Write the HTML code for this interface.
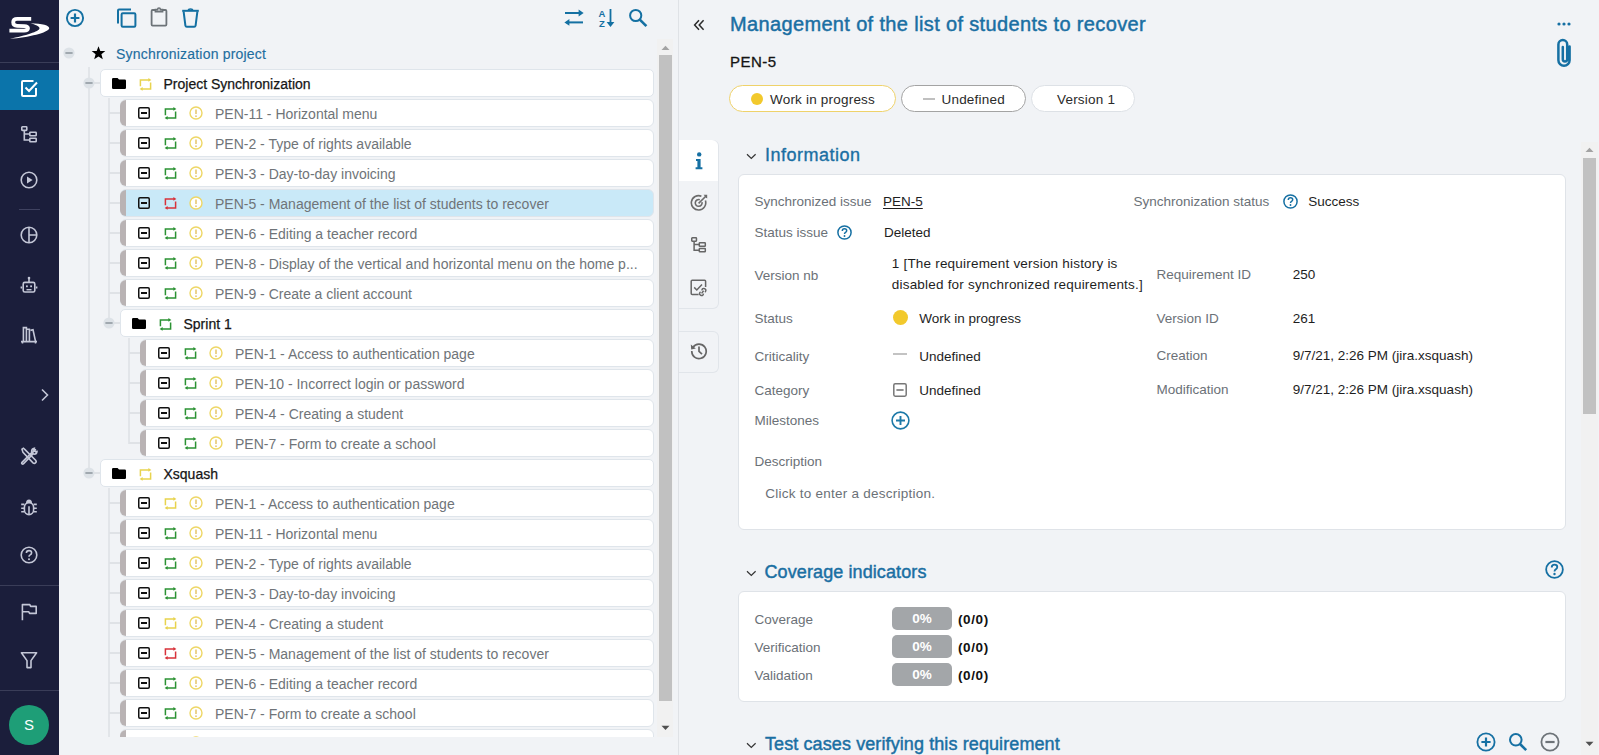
<!DOCTYPE html>
<html><head><meta charset="utf-8">
<style>
*{box-sizing:border-box;margin:0;padding:0}
html,body{width:1599px;height:755px;overflow:hidden;background:#f1f3f6;font-family:"Liberation Sans", sans-serif}
.abs{position:absolute}
.ic{position:absolute;display:block}
.card{position:absolute;background:#fff;border:1px solid #dfe5eb;border-radius:5px}
.bar{position:absolute;background:#b9b3b4;border-radius:6px 0 0 6px}
.tl{position:absolute;white-space:nowrap;font-size:14px;line-height:16px}
.vl{position:absolute;width:2px;background:#e2e5e9}
.hl{position:absolute;height:2px;background:#dfe2e6}
.lbl{position:absolute;white-space:nowrap;font-size:13.5px;line-height:16px;color:#6b7177}
.val{position:absolute;white-space:nowrap;font-size:13.5px;line-height:16px;color:#1e1e1e}
.sec{position:absolute;white-space:nowrap;font-size:18px;line-height:22px;color:#1670a3}
</style></head><body>
<div class="abs" style="left:0;top:0;width:59px;height:755px;background:#1b1e3b"></div><svg class="ic" style="left:4px;top:10px" width="50" height="35" viewBox="0 0 50 35">
<path d="M27.2 8.9H13.4Q9.2 8.9 9.2 12.2Q9.2 15.6 13.2 15.8L20.4 16.1Q24.2 16.3 24 18.4Q23.8 20.6 20 20.6H5.4" fill="none" stroke="#fff" stroke-width="3.8"/>
<path d="M26.5 13.3C38 13.5 46 15.5 45.2 18.5C44.2 22.5 25 27.5 5.5 28.8C22 25.5 35 21.5 35.5 18.5C36 16.5 31 14.5 26.5 13.3Z" fill="#fff"/>
</svg><div class="abs" style="left:0;top:62px;width:59px;height:1px;background:#3a3d58"></div><div class="abs" style="left:0;top:70px;width:59px;height:40px;background:#0b74aa"></div><svg class="ic" style="left:19px;top:78px" width="20" height="20" viewBox="0 0 20 20">
<path d="M14.5 3H4Q3 3 3 4V17Q3 18 4 18H16Q17 18 17 17V10" fill="none" stroke="#fff" stroke-width="2"/>
<path d="M6.5 9.5L10 13L18 4.5" fill="none" stroke="#fff" stroke-width="2"/>
</svg><svg class="ic" style="left:21px;top:126px" width="17" height="17" viewBox="0 0 17 17">
<g fill="none" stroke="#c4c7d7" stroke-width="1.6">
<rect x="0.8" y="0.8" width="5" height="3.6" rx="0.6"/>
<rect x="8.8" y="6.2" width="6.4" height="3.6" rx="0.6"/>
<rect x="8.8" y="12.2" width="6.4" height="3.6" rx="0.6"/>
<path d="M3.3 4.4V14H8.8M3.3 8H8.8"/>
</g></svg><svg class="ic" style="left:20px;top:171px" width="18" height="18" viewBox="0 0 18 18">
<circle cx="9" cy="9" r="7.8" fill="none" stroke="#c4c7d7" stroke-width="1.6"/>
<path d="M7 5.4L12.6 9L7 12.6Z" fill="#c4c7d7"/>
</svg><div class="abs" style="left:19px;top:209px;width:21px;height:1px;background:#3f4260"></div><svg class="ic" style="left:20px;top:226px" width="18" height="18" viewBox="0 0 18 18">
<circle cx="9" cy="9" r="7.8" fill="none" stroke="#c4c7d7" stroke-width="1.6"/>
<path d="M9 1.2V16.8M9 9H16.8" fill="none" stroke="#c4c7d7" stroke-width="1.6"/>
</svg><svg class="ic" style="left:20px;top:276px" width="18" height="18" viewBox="0 0 18 18">
<g fill="none" stroke="#c4c7d7" stroke-width="1.6">
<rect x="3.2" y="6.4" width="11.6" height="9.6" rx="1.6"/>
<path d="M9 6.4V3M1.4 10.5V12.6M16.6 10.5V12.6"/>
</g>
<circle cx="9" cy="2" r="1.3" fill="#c4c7d7"/>
<rect x="6" y="9.4" width="1.8" height="1.8" fill="#c4c7d7"/>
<rect x="10.2" y="9.4" width="1.8" height="1.8" fill="#c4c7d7"/>
<rect x="6.5" y="13" width="5" height="1.4" fill="#c4c7d7"/>
</svg><svg class="ic" style="left:20px;top:326px" width="18" height="18" viewBox="0 0 18 18">
<g fill="none" stroke="#c4c7d7" stroke-width="1.6">
<path d="M1 15.6H17M2.5 15.6V17.6M15.5 15.6V17.6"/>
<path d="M3.4 15.6V1.6H6.4V15.6M6.4 15.6V3.2H9.4V15.6"/>
<path d="M10.4 4.4L13 3.8L15.6 15.6"/>
</g></svg><svg class="ic" style="left:40px;top:388px" width="10" height="14" viewBox="0 0 10 14">
<path d="M2 1.5L7.5 7L2 12.5" fill="none" stroke="#c4c7d7" stroke-width="1.6"/>
</svg><svg class="ic" style="left:20px;top:447px" width="18" height="18" viewBox="0 0 18 18">
<g fill="none" stroke="#c4c7d7" stroke-width="1.6" stroke-linecap="round">
<path d="M2 2.2L3.4 1.2L5 2.6L15.6 13.2Q16.8 14.6 15.6 15.8Q14.4 17 13 15.8L3 5.4L2 2.2Z"/>
<path d="M10.4 7.6L15.4 2.6M14.2 1.2Q11.6 1.6 11.6 4.4L12 5.4L2 15.4Q1.2 16.2 2.1 16.9Q2.8 17.4 3.6 16.6L13.2 6.8L14.2 7.2Q16.8 7.2 17 4.4L15.4 4.6L13.6 3.2Z"/>
</g></svg><svg class="ic" style="left:20px;top:498px" width="18" height="18" viewBox="0 0 18 18">
<g fill="none" stroke="#c4c7d7" stroke-width="1.6">
<rect x="4.4" y="4.6" width="9.2" height="12" rx="4.6"/>
<path d="M9 8.2V16.4M1.2 6.4H4.4M1.2 10.2H4.4M1.2 13.8H4.4M13.6 6.4H16.8M13.6 10.2H16.8M13.6 13.8H16.8"/>
</g>
<path d="M6 5Q6 1.4 9 1.4Q12 1.4 12 5Z" fill="#c4c7d7"/>
</svg><svg class="ic" style="left:20px;top:546px" width="18" height="18" viewBox="0 0 18 18">
<circle cx="9" cy="9" r="7.8" fill="none" stroke="#c4c7d7" stroke-width="1.6"/>
<path d="M6.4 7Q6.4 4.6 9 4.6Q11.6 4.6 11.6 6.8Q11.6 8.2 10.2 8.9Q9 9.5 9 10.8" fill="none" stroke="#c4c7d7" stroke-width="1.6"/>
<circle cx="9" cy="13.2" r="1" fill="#c4c7d7"/>
</svg><div class="abs" style="left:0;top:585px;width:59px;height:1px;background:#3a3d58"></div><svg class="ic" style="left:20px;top:603px" width="18" height="18" viewBox="0 0 18 18">
<path d="M2.4 17.2V1.6H9.8L10.6 3.4H16.2V10.4H9.6L8.8 8.8H2.4" fill="none" stroke="#c4c7d7" stroke-width="1.6" stroke-linejoin="round"/>
</svg><svg class="ic" style="left:20px;top:651px" width="18" height="18" viewBox="0 0 18 18">
<path d="M1.4 1.8H16.6L11 9.6V16.6H7V9.6Z" fill="none" stroke="#c4c7d7" stroke-width="1.6" stroke-linejoin="round"/>
</svg><div class="abs" style="left:0;top:690px;width:59px;height:1px;background:#3a3d58"></div><div class="abs" style="left:9px;top:705px;width:40px;height:40px;border-radius:20px;background:#1e9e77;color:#fff;font-size:15px;line-height:40px;text-align:center">S</div><svg class="ic" style="left:65px;top:8px" width="20" height="20" viewBox="0 0 20 20">
<circle cx="10" cy="10" r="8.1" fill="none" stroke="#1470a2" stroke-width="1.9"/>
<path d="M10 5.6V14.4M5.6 10H14.4" stroke="#1470a2" stroke-width="2.2"/>
</svg><svg class="ic" style="left:116px;top:8px" width="22" height="20" viewBox="0 0 22 20">
<path d="M2 15.5V2.6Q2 1.6 3 1.6H15" fill="none" stroke="#1470a2" stroke-width="2"/>
<rect x="5.6" y="5.2" width="13.8" height="13.6" rx="1.2" fill="none" stroke="#1470a2" stroke-width="2"/>
</svg><svg class="ic" style="left:150px;top:7px" width="18" height="20" viewBox="0 0 18 20">
<path d="M5.4 3H2.6Q1.6 3 1.6 4V17.6Q1.6 18.6 2.6 18.6H15.4Q16.4 18.6 16.4 17.6V4Q16.4 3 15.4 3H12.6" fill="none" stroke="#6d7378" stroke-width="1.8"/>
<path d="M5.4 4.6V2.6H7.6Q7.6 1 9 1Q10.4 1 10.4 2.6H12.6V4.6Z" fill="none" stroke="#6d7378" stroke-width="1.6"/>
</svg><svg class="ic" style="left:181px;top:8px" width="19" height="20" viewBox="0 0 19 20">
<path d="M1.2 2.8H17.8" stroke="#1470a2" stroke-width="2"/>
<path d="M7.4 2.6Q7.4 1 9.5 1Q11.6 1 11.6 2.6" fill="none" stroke="#1470a2" stroke-width="1.6"/>
<path d="M2.6 3.4L4.4 17.6Q4.6 18.8 5.8 18.8H13.2Q14.4 18.8 14.6 17.6L16.4 3.4" fill="none" stroke="#1470a2" stroke-width="2"/>
</svg><svg class="ic" style="left:563px;top:8px" width="22" height="20" viewBox="0 0 22 20">
<path d="M2 5H18.5" stroke="#1470a2" stroke-width="2"/>
<path d="M15.6 1.6L20.6 5L15.6 8.4Z" fill="#1470a2"/>
<path d="M20 14.4H3.5" stroke="#1470a2" stroke-width="2"/>
<path d="M6.4 11L1.4 14.4L6.4 17.8Z" fill="#1470a2"/>
</svg><div class="abs" style="left:597px;top:8.5px;width:10px;font-size:9.5px;line-height:10px;font-weight:bold;color:#1470a2;text-align:center">A<br>Z</div><svg class="ic" style="left:605px;top:8px" width="12" height="20" viewBox="0 0 12 20">
<path d="M5.5 1V17" stroke="#1470a2" stroke-width="1.8"/>
<path d="M1.6 14L5.5 19L9.4 14Z" fill="#1470a2"/>
</svg><svg class="ic" style="left:627px;top:7px" width="22" height="22" viewBox="0 0 22 22">
<circle cx="8.7" cy="8.5" r="5.6" fill="none" stroke="#1470a2" stroke-width="2"/>
<path d="M12.8 12.6L19.4 19.2" stroke="#1470a2" stroke-width="2.6"/>
</svg><div class="abs" style="left:59px;top:39px;width:619px;height:698px;overflow:hidden"><div class="abs" style="left:4px;top:8px"><svg width="12" height="12" viewBox="0 0 12 12" style="display:block"><circle cx="6" cy="6" r="5.6" fill="#dde2e7"/><rect x="2.4" y="5.1" width="7.2" height="1.8" fill="#9aa2a9"/></svg></div><svg class="ic" style="left:32px;top:7px" width="15" height="14" viewBox="0 0 15 14">
<path d="M7.5 0.3L9.3 4.9L14.3 5.1L10.4 8.2L11.8 13.2L7.5 10.4L3.2 13.2L4.6 8.2L0.7 5.1L5.7 4.9Z" fill="#000"/></svg><div class="tl" style="left:57px;top:7px;color:#1f6e9f;letter-spacing:0.2px;-webkit-text-stroke:0.15px #1f6e9f">Synchronization project</div><div class="vl" style="left:29px;top:28px;height:407px"></div><div class="vl" style="left:49px;top:59px;height:226px"></div><div class="vl" style="left:69px;top:299px;height:106px"></div><div class="vl" style="left:49px;top:449px;height:272px"></div><div class="abs" style="left:24px;top:38px"><svg width="12" height="12" viewBox="0 0 12 12" style="display:block"><circle cx="6" cy="6" r="5.6" fill="#dde2e7"/><rect x="2.4" y="5.1" width="7.2" height="1.8" fill="#9aa2a9"/></svg></div><div class="hl" style="left:35px;top:43px;width:6px"></div><div class="card" style="left:41px;top:30px;width:554px;height:28px"></div><div class="abs" style="left:53px;top:38.5px"><svg width="14" height="11" viewBox="0 0 14 11" style="display:block"><path d="M0 1.2Q0 0 1.2 0H5.6L7 1.6H12.8Q14 1.6 14 2.8V9.8Q14 11 12.8 11H1.2Q0 11 0 9.8Z" fill="#000"/></svg></div><div class="abs" style="left:79.5px;top:38.5px"><svg width="13" height="13" viewBox="0 0 13 13" style="display:block"><path d="M1.4 8.2V1.9H10" fill="none" stroke="#e8d34e" stroke-width="1.5"/><path d="M9.4 0L12.4 1.9L9.4 3.8Z" fill="#e8d34e"/><path d="M11.6 4.6V10.9H3" fill="none" stroke="#e8d34e" stroke-width="1.5"/><path d="M3.6 9L0.6 10.9L3.6 12.8Z" fill="#e8d34e"/></svg></div><div class="tl" style="left:104.5px;top:37px;color:#161616;-webkit-text-stroke:0.25px #161616">Project Synchronization</div><div class="hl" style="left:50px;top:73px;width:11px"></div><div class="card" style="left:61px;top:60px;width:534px;height:28px;background:#fff;border-radius:6px"></div><div class="bar" style="left:61px;top:61px;width:6px;height:26px"></div><div class="abs" style="left:79px;top:68px"><svg width="12" height="12" viewBox="0 0 12 12" style="display:block"><rect x="0.75" y="0.75" width="10.5" height="10.5" rx="1.2" fill="none" stroke="#111" stroke-width="1.5"/><rect x="3" y="5" width="6" height="2" fill="#111"/></svg></div><div class="abs" style="left:105px;top:68px"><svg width="13" height="13" viewBox="0 0 13 13" style="display:block"><path d="M1.4 8.2V1.9H10" fill="none" stroke="#2b9233" stroke-width="1.5"/><path d="M9.4 0L12.4 1.9L9.4 3.8Z" fill="#2b9233"/><path d="M11.6 4.6V10.9H3" fill="none" stroke="#2b9233" stroke-width="1.5"/><path d="M3.6 9L0.6 10.9L3.6 12.8Z" fill="#2b9233"/></svg></div><div class="abs" style="left:130px;top:67px"><svg width="14" height="14" viewBox="0 0 14 14" style="display:block"><circle cx="7" cy="7" r="6" fill="#fff" stroke="#eed766" stroke-width="1.4"/><path d="M7 3.6V8" stroke="#e6c872" stroke-width="1.6"/><circle cx="7" cy="10.2" r="0.9" fill="#e6c872"/></svg></div><div class="tl" style="left:156px;top:67px;color:#6f7478">PEN-11 - Horizontal menu</div><div class="hl" style="left:50px;top:103px;width:11px"></div><div class="card" style="left:61px;top:90px;width:534px;height:28px;background:#fff;border-radius:6px"></div><div class="bar" style="left:61px;top:91px;width:6px;height:26px"></div><div class="abs" style="left:79px;top:98px"><svg width="12" height="12" viewBox="0 0 12 12" style="display:block"><rect x="0.75" y="0.75" width="10.5" height="10.5" rx="1.2" fill="none" stroke="#111" stroke-width="1.5"/><rect x="3" y="5" width="6" height="2" fill="#111"/></svg></div><div class="abs" style="left:105px;top:98px"><svg width="13" height="13" viewBox="0 0 13 13" style="display:block"><path d="M1.4 8.2V1.9H10" fill="none" stroke="#2b9233" stroke-width="1.5"/><path d="M9.4 0L12.4 1.9L9.4 3.8Z" fill="#2b9233"/><path d="M11.6 4.6V10.9H3" fill="none" stroke="#2b9233" stroke-width="1.5"/><path d="M3.6 9L0.6 10.9L3.6 12.8Z" fill="#2b9233"/></svg></div><div class="abs" style="left:130px;top:97px"><svg width="14" height="14" viewBox="0 0 14 14" style="display:block"><circle cx="7" cy="7" r="6" fill="#fff" stroke="#eed766" stroke-width="1.4"/><path d="M7 3.6V8" stroke="#e6c872" stroke-width="1.6"/><circle cx="7" cy="10.2" r="0.9" fill="#e6c872"/></svg></div><div class="tl" style="left:156px;top:97px;color:#6f7478">PEN-2 - Type of rights available</div><div class="hl" style="left:50px;top:133px;width:11px"></div><div class="card" style="left:61px;top:120px;width:534px;height:28px;background:#fff;border-radius:6px"></div><div class="bar" style="left:61px;top:121px;width:6px;height:26px"></div><div class="abs" style="left:79px;top:128px"><svg width="12" height="12" viewBox="0 0 12 12" style="display:block"><rect x="0.75" y="0.75" width="10.5" height="10.5" rx="1.2" fill="none" stroke="#111" stroke-width="1.5"/><rect x="3" y="5" width="6" height="2" fill="#111"/></svg></div><div class="abs" style="left:105px;top:128px"><svg width="13" height="13" viewBox="0 0 13 13" style="display:block"><path d="M1.4 8.2V1.9H10" fill="none" stroke="#2b9233" stroke-width="1.5"/><path d="M9.4 0L12.4 1.9L9.4 3.8Z" fill="#2b9233"/><path d="M11.6 4.6V10.9H3" fill="none" stroke="#2b9233" stroke-width="1.5"/><path d="M3.6 9L0.6 10.9L3.6 12.8Z" fill="#2b9233"/></svg></div><div class="abs" style="left:130px;top:127px"><svg width="14" height="14" viewBox="0 0 14 14" style="display:block"><circle cx="7" cy="7" r="6" fill="#fff" stroke="#eed766" stroke-width="1.4"/><path d="M7 3.6V8" stroke="#e6c872" stroke-width="1.6"/><circle cx="7" cy="10.2" r="0.9" fill="#e6c872"/></svg></div><div class="tl" style="left:156px;top:127px;color:#6f7478">PEN-3 - Day-to-day invoicing</div><div class="hl" style="left:50px;top:163px;width:11px"></div><div class="card" style="left:61px;top:150px;width:534px;height:28px;background:#c9e9f8;border-radius:6px"></div><div class="bar" style="left:61px;top:151px;width:6px;height:26px"></div><div class="abs" style="left:79px;top:158px"><svg width="12" height="12" viewBox="0 0 12 12" style="display:block"><rect x="0.75" y="0.75" width="10.5" height="10.5" rx="1.2" fill="none" stroke="#111" stroke-width="1.5"/><rect x="3" y="5" width="6" height="2" fill="#111"/></svg></div><div class="abs" style="left:105px;top:158px"><svg width="13" height="13" viewBox="0 0 13 13" style="display:block"><path d="M1.4 8.2V1.9H10" fill="none" stroke="#d8323a" stroke-width="1.5"/><path d="M9.4 0L12.4 1.9L9.4 3.8Z" fill="#d8323a"/><path d="M11.6 4.6V10.9H3" fill="none" stroke="#d8323a" stroke-width="1.5"/><path d="M3.6 9L0.6 10.9L3.6 12.8Z" fill="#d8323a"/></svg></div><div class="abs" style="left:130px;top:157px"><svg width="14" height="14" viewBox="0 0 14 14" style="display:block"><circle cx="7" cy="7" r="6" fill="#fff" stroke="#eed766" stroke-width="1.4"/><path d="M7 3.6V8" stroke="#e6c872" stroke-width="1.6"/><circle cx="7" cy="10.2" r="0.9" fill="#e6c872"/></svg></div><div class="tl" style="left:156px;top:157px;color:#6f7478">PEN-5 - Management of the list of students to recover</div><div class="hl" style="left:50px;top:193px;width:11px"></div><div class="card" style="left:61px;top:180px;width:534px;height:28px;background:#fff;border-radius:6px"></div><div class="bar" style="left:61px;top:181px;width:6px;height:26px"></div><div class="abs" style="left:79px;top:188px"><svg width="12" height="12" viewBox="0 0 12 12" style="display:block"><rect x="0.75" y="0.75" width="10.5" height="10.5" rx="1.2" fill="none" stroke="#111" stroke-width="1.5"/><rect x="3" y="5" width="6" height="2" fill="#111"/></svg></div><div class="abs" style="left:105px;top:188px"><svg width="13" height="13" viewBox="0 0 13 13" style="display:block"><path d="M1.4 8.2V1.9H10" fill="none" stroke="#2b9233" stroke-width="1.5"/><path d="M9.4 0L12.4 1.9L9.4 3.8Z" fill="#2b9233"/><path d="M11.6 4.6V10.9H3" fill="none" stroke="#2b9233" stroke-width="1.5"/><path d="M3.6 9L0.6 10.9L3.6 12.8Z" fill="#2b9233"/></svg></div><div class="abs" style="left:130px;top:187px"><svg width="14" height="14" viewBox="0 0 14 14" style="display:block"><circle cx="7" cy="7" r="6" fill="#fff" stroke="#eed766" stroke-width="1.4"/><path d="M7 3.6V8" stroke="#e6c872" stroke-width="1.6"/><circle cx="7" cy="10.2" r="0.9" fill="#e6c872"/></svg></div><div class="tl" style="left:156px;top:187px;color:#6f7478">PEN-6 - Editing a teacher record</div><div class="hl" style="left:50px;top:223px;width:11px"></div><div class="card" style="left:61px;top:210px;width:534px;height:28px;background:#fff;border-radius:6px"></div><div class="bar" style="left:61px;top:211px;width:6px;height:26px"></div><div class="abs" style="left:79px;top:218px"><svg width="12" height="12" viewBox="0 0 12 12" style="display:block"><rect x="0.75" y="0.75" width="10.5" height="10.5" rx="1.2" fill="none" stroke="#111" stroke-width="1.5"/><rect x="3" y="5" width="6" height="2" fill="#111"/></svg></div><div class="abs" style="left:105px;top:218px"><svg width="13" height="13" viewBox="0 0 13 13" style="display:block"><path d="M1.4 8.2V1.9H10" fill="none" stroke="#2b9233" stroke-width="1.5"/><path d="M9.4 0L12.4 1.9L9.4 3.8Z" fill="#2b9233"/><path d="M11.6 4.6V10.9H3" fill="none" stroke="#2b9233" stroke-width="1.5"/><path d="M3.6 9L0.6 10.9L3.6 12.8Z" fill="#2b9233"/></svg></div><div class="abs" style="left:130px;top:217px"><svg width="14" height="14" viewBox="0 0 14 14" style="display:block"><circle cx="7" cy="7" r="6" fill="#fff" stroke="#eed766" stroke-width="1.4"/><path d="M7 3.6V8" stroke="#e6c872" stroke-width="1.6"/><circle cx="7" cy="10.2" r="0.9" fill="#e6c872"/></svg></div><div class="tl" style="left:156px;top:217px;color:#6f7478">PEN-8 - Display of the vertical and horizontal menu on the home p...</div><div class="hl" style="left:50px;top:253px;width:11px"></div><div class="card" style="left:61px;top:240px;width:534px;height:28px;background:#fff;border-radius:6px"></div><div class="bar" style="left:61px;top:241px;width:6px;height:26px"></div><div class="abs" style="left:79px;top:248px"><svg width="12" height="12" viewBox="0 0 12 12" style="display:block"><rect x="0.75" y="0.75" width="10.5" height="10.5" rx="1.2" fill="none" stroke="#111" stroke-width="1.5"/><rect x="3" y="5" width="6" height="2" fill="#111"/></svg></div><div class="abs" style="left:105px;top:248px"><svg width="13" height="13" viewBox="0 0 13 13" style="display:block"><path d="M1.4 8.2V1.9H10" fill="none" stroke="#2b9233" stroke-width="1.5"/><path d="M9.4 0L12.4 1.9L9.4 3.8Z" fill="#2b9233"/><path d="M11.6 4.6V10.9H3" fill="none" stroke="#2b9233" stroke-width="1.5"/><path d="M3.6 9L0.6 10.9L3.6 12.8Z" fill="#2b9233"/></svg></div><div class="abs" style="left:130px;top:247px"><svg width="14" height="14" viewBox="0 0 14 14" style="display:block"><circle cx="7" cy="7" r="6" fill="#fff" stroke="#eed766" stroke-width="1.4"/><path d="M7 3.6V8" stroke="#e6c872" stroke-width="1.6"/><circle cx="7" cy="10.2" r="0.9" fill="#e6c872"/></svg></div><div class="tl" style="left:156px;top:247px;color:#6f7478">PEN-9 - Create a client account</div><div class="abs" style="left:44px;top:278px"><svg width="12" height="12" viewBox="0 0 12 12" style="display:block"><circle cx="6" cy="6" r="5.6" fill="#dde2e7"/><rect x="2.4" y="5.1" width="7.2" height="1.8" fill="#9aa2a9"/></svg></div><div class="hl" style="left:55px;top:283px;width:6px"></div><div class="card" style="left:61px;top:270px;width:534px;height:28px"></div><div class="abs" style="left:73px;top:278.5px"><svg width="14" height="11" viewBox="0 0 14 11" style="display:block"><path d="M0 1.2Q0 0 1.2 0H5.6L7 1.6H12.8Q14 1.6 14 2.8V9.8Q14 11 12.8 11H1.2Q0 11 0 9.8Z" fill="#000"/></svg></div><div class="abs" style="left:99.5px;top:278.5px"><svg width="13" height="13" viewBox="0 0 13 13" style="display:block"><path d="M1.4 8.2V1.9H10" fill="none" stroke="#2b9233" stroke-width="1.5"/><path d="M9.4 0L12.4 1.9L9.4 3.8Z" fill="#2b9233"/><path d="M11.6 4.6V10.9H3" fill="none" stroke="#2b9233" stroke-width="1.5"/><path d="M3.6 9L0.6 10.9L3.6 12.8Z" fill="#2b9233"/></svg></div><div class="tl" style="left:124.5px;top:277px;color:#161616;-webkit-text-stroke:0.25px #161616">Sprint 1</div><div class="hl" style="left:70px;top:313px;width:11px"></div><div class="card" style="left:81px;top:300px;width:514px;height:28px;background:#fff;border-radius:6px"></div><div class="bar" style="left:81px;top:301px;width:6px;height:26px"></div><div class="abs" style="left:99px;top:308px"><svg width="12" height="12" viewBox="0 0 12 12" style="display:block"><rect x="0.75" y="0.75" width="10.5" height="10.5" rx="1.2" fill="none" stroke="#111" stroke-width="1.5"/><rect x="3" y="5" width="6" height="2" fill="#111"/></svg></div><div class="abs" style="left:125px;top:308px"><svg width="13" height="13" viewBox="0 0 13 13" style="display:block"><path d="M1.4 8.2V1.9H10" fill="none" stroke="#2b9233" stroke-width="1.5"/><path d="M9.4 0L12.4 1.9L9.4 3.8Z" fill="#2b9233"/><path d="M11.6 4.6V10.9H3" fill="none" stroke="#2b9233" stroke-width="1.5"/><path d="M3.6 9L0.6 10.9L3.6 12.8Z" fill="#2b9233"/></svg></div><div class="abs" style="left:150px;top:307px"><svg width="14" height="14" viewBox="0 0 14 14" style="display:block"><circle cx="7" cy="7" r="6" fill="#fff" stroke="#eed766" stroke-width="1.4"/><path d="M7 3.6V8" stroke="#e6c872" stroke-width="1.6"/><circle cx="7" cy="10.2" r="0.9" fill="#e6c872"/></svg></div><div class="tl" style="left:176px;top:307px;color:#6f7478">PEN-1 - Access to authentication page</div><div class="hl" style="left:70px;top:343px;width:11px"></div><div class="card" style="left:81px;top:330px;width:514px;height:28px;background:#fff;border-radius:6px"></div><div class="bar" style="left:81px;top:331px;width:6px;height:26px"></div><div class="abs" style="left:99px;top:338px"><svg width="12" height="12" viewBox="0 0 12 12" style="display:block"><rect x="0.75" y="0.75" width="10.5" height="10.5" rx="1.2" fill="none" stroke="#111" stroke-width="1.5"/><rect x="3" y="5" width="6" height="2" fill="#111"/></svg></div><div class="abs" style="left:125px;top:338px"><svg width="13" height="13" viewBox="0 0 13 13" style="display:block"><path d="M1.4 8.2V1.9H10" fill="none" stroke="#2b9233" stroke-width="1.5"/><path d="M9.4 0L12.4 1.9L9.4 3.8Z" fill="#2b9233"/><path d="M11.6 4.6V10.9H3" fill="none" stroke="#2b9233" stroke-width="1.5"/><path d="M3.6 9L0.6 10.9L3.6 12.8Z" fill="#2b9233"/></svg></div><div class="abs" style="left:150px;top:337px"><svg width="14" height="14" viewBox="0 0 14 14" style="display:block"><circle cx="7" cy="7" r="6" fill="#fff" stroke="#eed766" stroke-width="1.4"/><path d="M7 3.6V8" stroke="#e6c872" stroke-width="1.6"/><circle cx="7" cy="10.2" r="0.9" fill="#e6c872"/></svg></div><div class="tl" style="left:176px;top:337px;color:#6f7478">PEN-10 - Incorrect login or password</div><div class="hl" style="left:70px;top:373px;width:11px"></div><div class="card" style="left:81px;top:360px;width:514px;height:28px;background:#fff;border-radius:6px"></div><div class="bar" style="left:81px;top:361px;width:6px;height:26px"></div><div class="abs" style="left:99px;top:368px"><svg width="12" height="12" viewBox="0 0 12 12" style="display:block"><rect x="0.75" y="0.75" width="10.5" height="10.5" rx="1.2" fill="none" stroke="#111" stroke-width="1.5"/><rect x="3" y="5" width="6" height="2" fill="#111"/></svg></div><div class="abs" style="left:125px;top:368px"><svg width="13" height="13" viewBox="0 0 13 13" style="display:block"><path d="M1.4 8.2V1.9H10" fill="none" stroke="#2b9233" stroke-width="1.5"/><path d="M9.4 0L12.4 1.9L9.4 3.8Z" fill="#2b9233"/><path d="M11.6 4.6V10.9H3" fill="none" stroke="#2b9233" stroke-width="1.5"/><path d="M3.6 9L0.6 10.9L3.6 12.8Z" fill="#2b9233"/></svg></div><div class="abs" style="left:150px;top:367px"><svg width="14" height="14" viewBox="0 0 14 14" style="display:block"><circle cx="7" cy="7" r="6" fill="#fff" stroke="#eed766" stroke-width="1.4"/><path d="M7 3.6V8" stroke="#e6c872" stroke-width="1.6"/><circle cx="7" cy="10.2" r="0.9" fill="#e6c872"/></svg></div><div class="tl" style="left:176px;top:367px;color:#6f7478">PEN-4 - Creating a student</div><div class="hl" style="left:70px;top:403px;width:11px"></div><div class="card" style="left:81px;top:390px;width:514px;height:28px;background:#fff;border-radius:6px"></div><div class="bar" style="left:81px;top:391px;width:6px;height:26px"></div><div class="abs" style="left:99px;top:398px"><svg width="12" height="12" viewBox="0 0 12 12" style="display:block"><rect x="0.75" y="0.75" width="10.5" height="10.5" rx="1.2" fill="none" stroke="#111" stroke-width="1.5"/><rect x="3" y="5" width="6" height="2" fill="#111"/></svg></div><div class="abs" style="left:125px;top:398px"><svg width="13" height="13" viewBox="0 0 13 13" style="display:block"><path d="M1.4 8.2V1.9H10" fill="none" stroke="#2b9233" stroke-width="1.5"/><path d="M9.4 0L12.4 1.9L9.4 3.8Z" fill="#2b9233"/><path d="M11.6 4.6V10.9H3" fill="none" stroke="#2b9233" stroke-width="1.5"/><path d="M3.6 9L0.6 10.9L3.6 12.8Z" fill="#2b9233"/></svg></div><div class="abs" style="left:150px;top:397px"><svg width="14" height="14" viewBox="0 0 14 14" style="display:block"><circle cx="7" cy="7" r="6" fill="#fff" stroke="#eed766" stroke-width="1.4"/><path d="M7 3.6V8" stroke="#e6c872" stroke-width="1.6"/><circle cx="7" cy="10.2" r="0.9" fill="#e6c872"/></svg></div><div class="tl" style="left:176px;top:397px;color:#6f7478">PEN-7 - Form to create a school</div><div class="abs" style="left:24px;top:428px"><svg width="12" height="12" viewBox="0 0 12 12" style="display:block"><circle cx="6" cy="6" r="5.6" fill="#dde2e7"/><rect x="2.4" y="5.1" width="7.2" height="1.8" fill="#9aa2a9"/></svg></div><div class="hl" style="left:35px;top:433px;width:6px"></div><div class="card" style="left:41px;top:420px;width:554px;height:28px"></div><div class="abs" style="left:53px;top:428.5px"><svg width="14" height="11" viewBox="0 0 14 11" style="display:block"><path d="M0 1.2Q0 0 1.2 0H5.6L7 1.6H12.8Q14 1.6 14 2.8V9.8Q14 11 12.8 11H1.2Q0 11 0 9.8Z" fill="#000"/></svg></div><div class="abs" style="left:79.5px;top:428.5px"><svg width="13" height="13" viewBox="0 0 13 13" style="display:block"><path d="M1.4 8.2V1.9H10" fill="none" stroke="#e8d34e" stroke-width="1.5"/><path d="M9.4 0L12.4 1.9L9.4 3.8Z" fill="#e8d34e"/><path d="M11.6 4.6V10.9H3" fill="none" stroke="#e8d34e" stroke-width="1.5"/><path d="M3.6 9L0.6 10.9L3.6 12.8Z" fill="#e8d34e"/></svg></div><div class="tl" style="left:104.5px;top:427px;color:#161616;-webkit-text-stroke:0.25px #161616">Xsquash</div><div class="hl" style="left:50px;top:463px;width:11px"></div><div class="card" style="left:61px;top:450px;width:534px;height:28px;background:#fff;border-radius:6px"></div><div class="bar" style="left:61px;top:451px;width:6px;height:26px"></div><div class="abs" style="left:79px;top:458px"><svg width="12" height="12" viewBox="0 0 12 12" style="display:block"><rect x="0.75" y="0.75" width="10.5" height="10.5" rx="1.2" fill="none" stroke="#111" stroke-width="1.5"/><rect x="3" y="5" width="6" height="2" fill="#111"/></svg></div><div class="abs" style="left:105px;top:458px"><svg width="13" height="13" viewBox="0 0 13 13" style="display:block"><path d="M1.4 8.2V1.9H10" fill="none" stroke="#e8d34e" stroke-width="1.5"/><path d="M9.4 0L12.4 1.9L9.4 3.8Z" fill="#e8d34e"/><path d="M11.6 4.6V10.9H3" fill="none" stroke="#e8d34e" stroke-width="1.5"/><path d="M3.6 9L0.6 10.9L3.6 12.8Z" fill="#e8d34e"/></svg></div><div class="abs" style="left:130px;top:457px"><svg width="14" height="14" viewBox="0 0 14 14" style="display:block"><circle cx="7" cy="7" r="6" fill="#fff" stroke="#eed766" stroke-width="1.4"/><path d="M7 3.6V8" stroke="#e6c872" stroke-width="1.6"/><circle cx="7" cy="10.2" r="0.9" fill="#e6c872"/></svg></div><div class="tl" style="left:156px;top:457px;color:#6f7478">PEN-1 - Access to authentication page</div><div class="hl" style="left:50px;top:493px;width:11px"></div><div class="card" style="left:61px;top:480px;width:534px;height:28px;background:#fff;border-radius:6px"></div><div class="bar" style="left:61px;top:481px;width:6px;height:26px"></div><div class="abs" style="left:79px;top:488px"><svg width="12" height="12" viewBox="0 0 12 12" style="display:block"><rect x="0.75" y="0.75" width="10.5" height="10.5" rx="1.2" fill="none" stroke="#111" stroke-width="1.5"/><rect x="3" y="5" width="6" height="2" fill="#111"/></svg></div><div class="abs" style="left:105px;top:488px"><svg width="13" height="13" viewBox="0 0 13 13" style="display:block"><path d="M1.4 8.2V1.9H10" fill="none" stroke="#2b9233" stroke-width="1.5"/><path d="M9.4 0L12.4 1.9L9.4 3.8Z" fill="#2b9233"/><path d="M11.6 4.6V10.9H3" fill="none" stroke="#2b9233" stroke-width="1.5"/><path d="M3.6 9L0.6 10.9L3.6 12.8Z" fill="#2b9233"/></svg></div><div class="abs" style="left:130px;top:487px"><svg width="14" height="14" viewBox="0 0 14 14" style="display:block"><circle cx="7" cy="7" r="6" fill="#fff" stroke="#eed766" stroke-width="1.4"/><path d="M7 3.6V8" stroke="#e6c872" stroke-width="1.6"/><circle cx="7" cy="10.2" r="0.9" fill="#e6c872"/></svg></div><div class="tl" style="left:156px;top:487px;color:#6f7478">PEN-11 - Horizontal menu</div><div class="hl" style="left:50px;top:523px;width:11px"></div><div class="card" style="left:61px;top:510px;width:534px;height:28px;background:#fff;border-radius:6px"></div><div class="bar" style="left:61px;top:511px;width:6px;height:26px"></div><div class="abs" style="left:79px;top:518px"><svg width="12" height="12" viewBox="0 0 12 12" style="display:block"><rect x="0.75" y="0.75" width="10.5" height="10.5" rx="1.2" fill="none" stroke="#111" stroke-width="1.5"/><rect x="3" y="5" width="6" height="2" fill="#111"/></svg></div><div class="abs" style="left:105px;top:518px"><svg width="13" height="13" viewBox="0 0 13 13" style="display:block"><path d="M1.4 8.2V1.9H10" fill="none" stroke="#2b9233" stroke-width="1.5"/><path d="M9.4 0L12.4 1.9L9.4 3.8Z" fill="#2b9233"/><path d="M11.6 4.6V10.9H3" fill="none" stroke="#2b9233" stroke-width="1.5"/><path d="M3.6 9L0.6 10.9L3.6 12.8Z" fill="#2b9233"/></svg></div><div class="abs" style="left:130px;top:517px"><svg width="14" height="14" viewBox="0 0 14 14" style="display:block"><circle cx="7" cy="7" r="6" fill="#fff" stroke="#eed766" stroke-width="1.4"/><path d="M7 3.6V8" stroke="#e6c872" stroke-width="1.6"/><circle cx="7" cy="10.2" r="0.9" fill="#e6c872"/></svg></div><div class="tl" style="left:156px;top:517px;color:#6f7478">PEN-2 - Type of rights available</div><div class="hl" style="left:50px;top:553px;width:11px"></div><div class="card" style="left:61px;top:540px;width:534px;height:28px;background:#fff;border-radius:6px"></div><div class="bar" style="left:61px;top:541px;width:6px;height:26px"></div><div class="abs" style="left:79px;top:548px"><svg width="12" height="12" viewBox="0 0 12 12" style="display:block"><rect x="0.75" y="0.75" width="10.5" height="10.5" rx="1.2" fill="none" stroke="#111" stroke-width="1.5"/><rect x="3" y="5" width="6" height="2" fill="#111"/></svg></div><div class="abs" style="left:105px;top:548px"><svg width="13" height="13" viewBox="0 0 13 13" style="display:block"><path d="M1.4 8.2V1.9H10" fill="none" stroke="#2b9233" stroke-width="1.5"/><path d="M9.4 0L12.4 1.9L9.4 3.8Z" fill="#2b9233"/><path d="M11.6 4.6V10.9H3" fill="none" stroke="#2b9233" stroke-width="1.5"/><path d="M3.6 9L0.6 10.9L3.6 12.8Z" fill="#2b9233"/></svg></div><div class="abs" style="left:130px;top:547px"><svg width="14" height="14" viewBox="0 0 14 14" style="display:block"><circle cx="7" cy="7" r="6" fill="#fff" stroke="#eed766" stroke-width="1.4"/><path d="M7 3.6V8" stroke="#e6c872" stroke-width="1.6"/><circle cx="7" cy="10.2" r="0.9" fill="#e6c872"/></svg></div><div class="tl" style="left:156px;top:547px;color:#6f7478">PEN-3 - Day-to-day invoicing</div><div class="hl" style="left:50px;top:583px;width:11px"></div><div class="card" style="left:61px;top:570px;width:534px;height:28px;background:#fff;border-radius:6px"></div><div class="bar" style="left:61px;top:571px;width:6px;height:26px"></div><div class="abs" style="left:79px;top:578px"><svg width="12" height="12" viewBox="0 0 12 12" style="display:block"><rect x="0.75" y="0.75" width="10.5" height="10.5" rx="1.2" fill="none" stroke="#111" stroke-width="1.5"/><rect x="3" y="5" width="6" height="2" fill="#111"/></svg></div><div class="abs" style="left:105px;top:578px"><svg width="13" height="13" viewBox="0 0 13 13" style="display:block"><path d="M1.4 8.2V1.9H10" fill="none" stroke="#e8d34e" stroke-width="1.5"/><path d="M9.4 0L12.4 1.9L9.4 3.8Z" fill="#e8d34e"/><path d="M11.6 4.6V10.9H3" fill="none" stroke="#e8d34e" stroke-width="1.5"/><path d="M3.6 9L0.6 10.9L3.6 12.8Z" fill="#e8d34e"/></svg></div><div class="abs" style="left:130px;top:577px"><svg width="14" height="14" viewBox="0 0 14 14" style="display:block"><circle cx="7" cy="7" r="6" fill="#fff" stroke="#eed766" stroke-width="1.4"/><path d="M7 3.6V8" stroke="#e6c872" stroke-width="1.6"/><circle cx="7" cy="10.2" r="0.9" fill="#e6c872"/></svg></div><div class="tl" style="left:156px;top:577px;color:#6f7478">PEN-4 - Creating a student</div><div class="hl" style="left:50px;top:613px;width:11px"></div><div class="card" style="left:61px;top:600px;width:534px;height:28px;background:#fff;border-radius:6px"></div><div class="bar" style="left:61px;top:601px;width:6px;height:26px"></div><div class="abs" style="left:79px;top:608px"><svg width="12" height="12" viewBox="0 0 12 12" style="display:block"><rect x="0.75" y="0.75" width="10.5" height="10.5" rx="1.2" fill="none" stroke="#111" stroke-width="1.5"/><rect x="3" y="5" width="6" height="2" fill="#111"/></svg></div><div class="abs" style="left:105px;top:608px"><svg width="13" height="13" viewBox="0 0 13 13" style="display:block"><path d="M1.4 8.2V1.9H10" fill="none" stroke="#d8323a" stroke-width="1.5"/><path d="M9.4 0L12.4 1.9L9.4 3.8Z" fill="#d8323a"/><path d="M11.6 4.6V10.9H3" fill="none" stroke="#d8323a" stroke-width="1.5"/><path d="M3.6 9L0.6 10.9L3.6 12.8Z" fill="#d8323a"/></svg></div><div class="abs" style="left:130px;top:607px"><svg width="14" height="14" viewBox="0 0 14 14" style="display:block"><circle cx="7" cy="7" r="6" fill="#fff" stroke="#eed766" stroke-width="1.4"/><path d="M7 3.6V8" stroke="#e6c872" stroke-width="1.6"/><circle cx="7" cy="10.2" r="0.9" fill="#e6c872"/></svg></div><div class="tl" style="left:156px;top:607px;color:#6f7478">PEN-5 - Management of the list of students to recover</div><div class="hl" style="left:50px;top:643px;width:11px"></div><div class="card" style="left:61px;top:630px;width:534px;height:28px;background:#fff;border-radius:6px"></div><div class="bar" style="left:61px;top:631px;width:6px;height:26px"></div><div class="abs" style="left:79px;top:638px"><svg width="12" height="12" viewBox="0 0 12 12" style="display:block"><rect x="0.75" y="0.75" width="10.5" height="10.5" rx="1.2" fill="none" stroke="#111" stroke-width="1.5"/><rect x="3" y="5" width="6" height="2" fill="#111"/></svg></div><div class="abs" style="left:105px;top:638px"><svg width="13" height="13" viewBox="0 0 13 13" style="display:block"><path d="M1.4 8.2V1.9H10" fill="none" stroke="#2b9233" stroke-width="1.5"/><path d="M9.4 0L12.4 1.9L9.4 3.8Z" fill="#2b9233"/><path d="M11.6 4.6V10.9H3" fill="none" stroke="#2b9233" stroke-width="1.5"/><path d="M3.6 9L0.6 10.9L3.6 12.8Z" fill="#2b9233"/></svg></div><div class="abs" style="left:130px;top:637px"><svg width="14" height="14" viewBox="0 0 14 14" style="display:block"><circle cx="7" cy="7" r="6" fill="#fff" stroke="#eed766" stroke-width="1.4"/><path d="M7 3.6V8" stroke="#e6c872" stroke-width="1.6"/><circle cx="7" cy="10.2" r="0.9" fill="#e6c872"/></svg></div><div class="tl" style="left:156px;top:637px;color:#6f7478">PEN-6 - Editing a teacher record</div><div class="hl" style="left:50px;top:673px;width:11px"></div><div class="card" style="left:61px;top:660px;width:534px;height:28px;background:#fff;border-radius:6px"></div><div class="bar" style="left:61px;top:661px;width:6px;height:26px"></div><div class="abs" style="left:79px;top:668px"><svg width="12" height="12" viewBox="0 0 12 12" style="display:block"><rect x="0.75" y="0.75" width="10.5" height="10.5" rx="1.2" fill="none" stroke="#111" stroke-width="1.5"/><rect x="3" y="5" width="6" height="2" fill="#111"/></svg></div><div class="abs" style="left:105px;top:668px"><svg width="13" height="13" viewBox="0 0 13 13" style="display:block"><path d="M1.4 8.2V1.9H10" fill="none" stroke="#2b9233" stroke-width="1.5"/><path d="M9.4 0L12.4 1.9L9.4 3.8Z" fill="#2b9233"/><path d="M11.6 4.6V10.9H3" fill="none" stroke="#2b9233" stroke-width="1.5"/><path d="M3.6 9L0.6 10.9L3.6 12.8Z" fill="#2b9233"/></svg></div><div class="abs" style="left:130px;top:667px"><svg width="14" height="14" viewBox="0 0 14 14" style="display:block"><circle cx="7" cy="7" r="6" fill="#fff" stroke="#eed766" stroke-width="1.4"/><path d="M7 3.6V8" stroke="#e6c872" stroke-width="1.6"/><circle cx="7" cy="10.2" r="0.9" fill="#e6c872"/></svg></div><div class="tl" style="left:156px;top:667px;color:#6f7478">PEN-7 - Form to create a school</div><div class="hl" style="left:50px;top:703px;width:11px"></div><div class="card" style="left:61px;top:690px;width:534px;height:28px;background:#fff;border-radius:6px"></div><div class="bar" style="left:61px;top:691px;width:6px;height:26px"></div><div class="abs" style="left:79px;top:698px"><svg width="12" height="12" viewBox="0 0 12 12" style="display:block"><rect x="0.75" y="0.75" width="10.5" height="10.5" rx="1.2" fill="none" stroke="#111" stroke-width="1.5"/><rect x="3" y="5" width="6" height="2" fill="#111"/></svg></div><div class="abs" style="left:105px;top:698px"><svg width="13" height="13" viewBox="0 0 13 13" style="display:block"><path d="M1.4 8.2V1.9H10" fill="none" stroke="#e8d34e" stroke-width="1.5"/><path d="M9.4 0L12.4 1.9L9.4 3.8Z" fill="#e8d34e"/><path d="M11.6 4.6V10.9H3" fill="none" stroke="#e8d34e" stroke-width="1.5"/><path d="M3.6 9L0.6 10.9L3.6 12.8Z" fill="#e8d34e"/></svg></div><div class="abs" style="left:130px;top:697px"><svg width="14" height="14" viewBox="0 0 14 14" style="display:block"><circle cx="7" cy="7" r="6" fill="#fff" stroke="#eed766" stroke-width="1.4"/><path d="M7 3.6V8" stroke="#e6c872" stroke-width="1.6"/><circle cx="7" cy="10.2" r="0.9" fill="#e6c872"/></svg></div><div class="tl" style="left:156px;top:697px;color:#6f7478">PEN-8 - Display of the vertical and horizontal menu on the home p...</div><div class="abs" style="left:598px;top:0;width:16px;height:698px;background:#f1f1f1"></div><div class="abs" style="left:600px;top:16px;width:13px;height:646px;background:#c1c1c1"></div><svg class="ic" style="left:602px;top:6px" width="9" height="6" viewBox="0 0 9 6"><path d="M0.5 5L4.5 0.8L8.5 5Z" fill="#a3a3a3"/></svg><svg class="ic" style="left:602px;top:686px" width="9" height="6" viewBox="0 0 9 6"><path d="M0.5 0.8L4.5 5L8.5 0.8Z" fill="#505050"/></svg></div><div class="abs" style="left:678px;top:0;width:1px;height:755px;background:#dfe2e6"></div><svg class="ic" style="left:693px;top:19px" width="12" height="12" viewBox="0 0 12 12"><path d="M6 1.2L1.6 6L6 10.8M10.6 1.2L6.2 6L10.6 10.8" fill="none" stroke="#2b2b2b" stroke-width="1.5"/></svg><div class="abs" style="left:730px;top:11.57px;font-size:20px;line-height:25px;color:#1a6fa3;font-weight:400;white-space:nowrap;letter-spacing:0.35px;-webkit-text-stroke:0.45px #1a6fa3">Management of the list of students to recover</div><div class="abs" style="left:730px;top:52.10px;font-size:15px;line-height:19px;color:#141414;font-weight:400;white-space:nowrap;letter-spacing:0.5px;-webkit-text-stroke:0.3px #141414">PEN-5</div><svg class="ic" style="left:1556px;top:21px" width="16" height="6" viewBox="0 0 16 6"><circle cx="3" cy="3" r="1.6" fill="#1670a3"/><circle cx="8" cy="3" r="1.6" fill="#1670a3"/><circle cx="13" cy="3" r="1.6" fill="#1670a3"/></svg><svg class="ic" style="left:1555px;top:37px" width="18" height="32" viewBox="0 0 18 32">
<path d="M14.6 9.6V23.2A5.6 5.6 0 0 1 3.4 23.2V7.4A4.4 4.4 0 0 1 12.2 7.4V22.2A2.2 2.2 0 0 1 7.8 22.2V10" fill="none" stroke="#1670a3" stroke-width="2.5" stroke-linecap="round"/>
</svg><div class="abs" style="left:729px;top:85px;width:167px;height:27px;border:1px solid #efd26a;border-radius:14px;background:#fff"></div><div class="abs" style="left:751px;top:93px;width:12px;height:12px;border-radius:6px;background:#f2c92c"></div><div class="abs" style="left:770px;top:90.82px;font-size:13.5px;line-height:17px;color:#2a2a2a;font-weight:400;white-space:nowrap;letter-spacing:0.2px">Work in progress</div><div class="abs" style="left:901px;top:85px;width:125px;height:27px;border:1px solid #a3a3a3;border-radius:14px;background:#fff"></div><div class="abs" style="left:923px;top:98px;width:12px;height:1.5px;background:#c0c0c0"></div><div class="abs" style="left:941.5px;top:90.82px;font-size:13.5px;line-height:17px;color:#2a2a2a;font-weight:400;white-space:nowrap;letter-spacing:0.2px">Undefined</div><div class="abs" style="left:1031px;top:85px;width:104px;height:27px;border:1px solid #dde1e6;border-radius:14px;background:#fff"></div><div class="abs" style="left:1057px;top:90.82px;font-size:13.5px;line-height:17px;color:#2a2a2a;font-weight:400;white-space:nowrap;letter-spacing:0.2px">Version 1</div><div class="abs" style="left:679px;top:140px;width:40px;height:169px;border:1px solid #e1e5ea;border-left:none;border-radius:0 6px 6px 0;background:#f1f3f6"></div><div class="abs" style="left:679px;top:140px;width:39px;height:41px;border-radius:0 6px 0 0;background:#fff"></div><div class="abs" style="left:679px;top:331px;width:40px;height:42px;border:1px solid #e1e5ea;border-left:none;border-radius:0 6px 6px 0;background:#f1f3f6"></div><svg class="ic" style="left:694px;top:152px" width="10" height="18" viewBox="0 0 10 18">
<circle cx="5.2" cy="2.4" r="2.2" fill="#1670a3"/>
<path d="M2 7H6.6V15.2H8.4V17.2H1.6V15.2H3.4V9H2Z" fill="#1670a3"/></svg><svg class="ic" style="left:690px;top:194px" width="18" height="18" viewBox="0 0 18 18">
<g fill="none" stroke="#6b6b6b" stroke-width="1.6">
<path d="M15.4 6.6A7.2 7.2 0 1 1 11.4 2.2"/>
<path d="M12 8.2A3.4 3.4 0 1 1 9.8 5.7"/>
<path d="M8.6 9.4L15.8 2.2"/>
</g>
<path d="M13.6 0.8L17.2 0.8L17.2 4.4L15.6 3.2Z" fill="#6b6b6b"/>
</svg><svg class="ic" style="left:691px;top:237px" width="16" height="16" viewBox="0 0 17 17">
<g fill="none" stroke="#666" stroke-width="1.6">
<rect x="0.8" y="0.8" width="5" height="3.6" rx="0.6"/>
<rect x="8.8" y="6.2" width="6.4" height="3.6" rx="0.6"/>
<rect x="8.8" y="12.2" width="6.4" height="3.6" rx="0.6"/>
<path d="M3.3 4.4V14H8.8M3.3 8H8.8"/>
</g></svg><svg class="ic" style="left:690px;top:279px" width="19" height="18" viewBox="0 0 19 18">
<g fill="none" stroke="#666" stroke-width="1.5">
<path d="M8.6 15.6H2.2Q1.2 15.6 1.2 14.6V2.2Q1.2 1.2 2.2 1.2H14.6Q15.6 1.2 15.6 2.2V8"/>
<path d="M4.2 8.4L6.8 11L12 5.6"/>
<path d="M12 11.4A1.8 1.8 0 0 1 14.6 9.6L15.6 10.4A1.8 1.8 0 0 1 14.8 13"/>
<path d="M13.4 14.6A1.8 1.8 0 0 1 10.8 16.4L9.8 15.6A1.8 1.8 0 0 1 10.6 13"/>
<path d="M11.6 14.4L13.6 11.8"/>
</g></svg><svg class="ic" style="left:690px;top:342px" width="18" height="18" viewBox="0 0 18 18">
<g fill="none" stroke="#666" stroke-width="1.7">
<path d="M3 5.4A7.2 7.2 0 1 1 1.8 9"/>
<path d="M9 4.6V9.4L12 12.2"/>
</g>
<path d="M0.8 2.6L1.2 7.6L5.8 6.4Z" fill="#666"/>
</svg><svg class="ic" style="left:746px;top:153px" width="11" height="7" viewBox="0 0 11 7"><path d="M1 1.2L5.3 5.4L9.6 1.2" fill="none" stroke="#333" stroke-width="1.2"/></svg><div class="abs" style="left:765px;top:143.76px;font-size:18px;line-height:22px;color:#1a6fa3;font-weight:400;white-space:nowrap;letter-spacing:0.5px;-webkit-text-stroke:0.35px #1a6fa3">Information</div><div class="abs" style="left:738px;top:174px;width:828px;height:356px;background:#fff;border:1px solid #dfe3e8;border-radius:6px"></div><div class="abs" style="left:754.5px;top:192.82px;font-size:13.5px;line-height:17px;color:#6b7177;font-weight:400;white-space:nowrap;">Synchronized issue</div><div class="abs" style="left:883px;top:192.82px;font-size:13.5px;line-height:17px;color:#1e1e1e;font-weight:400;white-space:nowrap;text-decoration:underline;text-underline-offset:2px">PEN-5</div><div class="abs" style="left:1133.5px;top:192.82px;font-size:13.5px;line-height:17px;color:#6b7177;font-weight:400;white-space:nowrap;">Synchronization status</div><svg class="ic" style="left:1283.20px;top:194.00px" width="15" height="15" viewBox="0 0 15 15">
<circle cx="7.5" cy="7.5" r="6.6" fill="none" stroke="#1670a3" stroke-width="1.50"/>
<path d="M5.3 5.9Q5.3 3.7 7.5 3.7Q9.7 3.7 9.7 5.6Q9.7 6.8 8.5 7.4Q7.5 7.9 7.5 9" fill="none" stroke="#1670a3" stroke-width="1.50"/>
<circle cx="7.5" cy="11" r="0.95" fill="#1670a3"/></svg><div class="abs" style="left:1308.3px;top:192.82px;font-size:13.5px;line-height:17px;color:#1e1e1e;font-weight:400;white-space:nowrap;">Success</div><div class="abs" style="left:754.5px;top:223.82px;font-size:13.5px;line-height:17px;color:#6b7177;font-weight:400;white-space:nowrap;">Status issue</div><svg class="ic" style="left:837.10px;top:224.80px" width="15" height="15" viewBox="0 0 15 15">
<circle cx="7.5" cy="7.5" r="6.6" fill="none" stroke="#1670a3" stroke-width="1.50"/>
<path d="M5.3 5.9Q5.3 3.7 7.5 3.7Q9.7 3.7 9.7 5.6Q9.7 6.8 8.5 7.4Q7.5 7.9 7.5 9" fill="none" stroke="#1670a3" stroke-width="1.50"/>
<circle cx="7.5" cy="11" r="0.95" fill="#1670a3"/></svg><div class="abs" style="left:884px;top:223.82px;font-size:13.5px;line-height:17px;color:#1e1e1e;font-weight:400;white-space:nowrap;">Deleted</div><div class="abs" style="left:754.5px;top:266.82px;font-size:13.5px;line-height:17px;color:#6b7177;font-weight:400;white-space:nowrap;">Version nb</div><div class="abs" style="left:891.8px;top:255.32px;font-size:13.5px;line-height:17px;color:#1e1e1e;font-weight:400;white-space:nowrap;letter-spacing:0.2px">1 [The requirement version history is</div><div class="abs" style="left:891.8px;top:275.82px;font-size:13.5px;line-height:17px;color:#1e1e1e;font-weight:400;white-space:nowrap;letter-spacing:0.2px">disabled for synchronized requirements.]</div><div class="abs" style="left:1156.5px;top:266.32px;font-size:13.5px;line-height:17px;color:#6b7177;font-weight:400;white-space:nowrap;">Requirement ID</div><div class="abs" style="left:1292.8px;top:266.32px;font-size:13.5px;line-height:17px;color:#1e1e1e;font-weight:400;white-space:nowrap;">250</div><div class="abs" style="left:754.5px;top:309.82px;font-size:13.5px;line-height:17px;color:#6b7177;font-weight:400;white-space:nowrap;">Status</div><div class="abs" style="left:892.5px;top:310px;width:15px;height:15px;border-radius:8px;background:#f2c92c"></div><div class="abs" style="left:919.2px;top:309.82px;font-size:13.5px;line-height:17px;color:#1e1e1e;font-weight:400;white-space:nowrap;">Work in progress</div><div class="abs" style="left:1156.5px;top:309.82px;font-size:13.5px;line-height:17px;color:#6b7177;font-weight:400;white-space:nowrap;">Version ID</div><div class="abs" style="left:1292.8px;top:309.82px;font-size:13.5px;line-height:17px;color:#1e1e1e;font-weight:400;white-space:nowrap;">261</div><div class="abs" style="left:754.5px;top:347.52px;font-size:13.5px;line-height:17px;color:#6b7177;font-weight:400;white-space:nowrap;">Criticality</div><div class="abs" style="left:893px;top:353px;width:14px;height:1.6px;background:#c3c3c3"></div><div class="abs" style="left:919.2px;top:347.52px;font-size:13.5px;line-height:17px;color:#1e1e1e;font-weight:400;white-space:nowrap;">Undefined</div><div class="abs" style="left:1156.5px;top:347.32px;font-size:13.5px;line-height:17px;color:#6b7177;font-weight:400;white-space:nowrap;">Creation</div><div class="abs" style="left:1292.8px;top:347.32px;font-size:13.5px;line-height:17px;color:#1e1e1e;font-weight:400;white-space:nowrap;">9/7/21, 2:26 PM (jira.xsquash)</div><div class="abs" style="left:754.5px;top:381.52px;font-size:13.5px;line-height:17px;color:#6b7177;font-weight:400;white-space:nowrap;">Category</div><svg class="ic" style="left:892.5px;top:382.5px" width="14" height="14" viewBox="0 0 14 14">
<rect x="0.8" y="0.8" width="12.4" height="12.4" rx="1.4" fill="none" stroke="#777" stroke-width="1.5"/>
<rect x="3.4" y="6.2" width="7.2" height="1.6" fill="#777"/></svg><div class="abs" style="left:919.2px;top:381.52px;font-size:13.5px;line-height:17px;color:#1e1e1e;font-weight:400;white-space:nowrap;">Undefined</div><div class="abs" style="left:1156.5px;top:381.12px;font-size:13.5px;line-height:17px;color:#6b7177;font-weight:400;white-space:nowrap;">Modification</div><div class="abs" style="left:1292.8px;top:381.12px;font-size:13.5px;line-height:17px;color:#1e1e1e;font-weight:400;white-space:nowrap;">9/7/21, 2:26 PM (jira.xsquash)</div><div class="abs" style="left:754.5px;top:411.82px;font-size:13.5px;line-height:17px;color:#6b7177;font-weight:400;white-space:nowrap;">Milestones</div><svg class="ic" style="left:890.5px;top:410.5px" width="19" height="19" viewBox="0 0 19 19">
<circle cx="9.5" cy="9.5" r="8.4" fill="none" stroke="#1c79a8" stroke-width="1.6"/>
<path d="M9.5 5V14M5 9.5H14" stroke="#1c79a8" stroke-width="1.9"/></svg><div class="abs" style="left:754.5px;top:453.32px;font-size:13.5px;line-height:17px;color:#6b7177;font-weight:400;white-space:nowrap;">Description</div><div class="abs" style="left:765.3px;top:484.82px;font-size:13.5px;line-height:17px;color:#6b7177;font-weight:400;white-space:nowrap;letter-spacing:0.25px">Click to enter a description.</div><svg class="ic" style="left:746px;top:570px" width="11" height="7" viewBox="0 0 11 7"><path d="M1 1.2L5.3 5.4L9.6 1.2" fill="none" stroke="#333" stroke-width="1.2"/></svg><div class="abs" style="left:764.5px;top:560.76px;font-size:18px;line-height:22px;color:#1a6fa3;font-weight:400;white-space:nowrap;letter-spacing:0.1px;-webkit-text-stroke:0.45px #1a6fa3">Coverage indicators</div><svg class="ic" style="left:1545.00px;top:559.50px" width="19" height="19" viewBox="0 0 15 15">
<circle cx="7.5" cy="7.5" r="6.6" fill="none" stroke="#1670a3" stroke-width="1.42"/>
<path d="M5.3 5.9Q5.3 3.7 7.5 3.7Q9.7 3.7 9.7 5.6Q9.7 6.8 8.5 7.4Q7.5 7.9 7.5 9" fill="none" stroke="#1670a3" stroke-width="1.42"/>
<circle cx="7.5" cy="11" r="0.95" fill="#1670a3"/></svg><div class="abs" style="left:738px;top:591px;width:828px;height:111px;background:#fff;border:1px solid #dfe3e8;border-radius:6px"></div><div class="abs" style="left:754.5px;top:610.82px;font-size:13.5px;line-height:17px;color:#6b7177;font-weight:400;white-space:nowrap;">Coverage</div><div class="abs" style="left:892px;top:607px;width:60px;height:23px;border-radius:5px;background:#a3a6a9;color:#fff;font-weight:700;font-size:13.5px;line-height:23px;text-align:center">0%</div><div class="abs" style="left:958px;top:610.82px;font-size:13.5px;line-height:17px;color:#111;font-weight:700;white-space:nowrap;letter-spacing:0.6px">(0/0)</div><div class="abs" style="left:754.5px;top:638.82px;font-size:13.5px;line-height:17px;color:#6b7177;font-weight:400;white-space:nowrap;">Verification</div><div class="abs" style="left:892px;top:635px;width:60px;height:23px;border-radius:5px;background:#a3a6a9;color:#fff;font-weight:700;font-size:13.5px;line-height:23px;text-align:center">0%</div><div class="abs" style="left:958px;top:638.82px;font-size:13.5px;line-height:17px;color:#111;font-weight:700;white-space:nowrap;letter-spacing:0.6px">(0/0)</div><div class="abs" style="left:754.5px;top:666.82px;font-size:13.5px;line-height:17px;color:#6b7177;font-weight:400;white-space:nowrap;">Validation</div><div class="abs" style="left:892px;top:663px;width:60px;height:23px;border-radius:5px;background:#a3a6a9;color:#fff;font-weight:700;font-size:13.5px;line-height:23px;text-align:center">0%</div><div class="abs" style="left:958px;top:666.82px;font-size:13.5px;line-height:17px;color:#111;font-weight:700;white-space:nowrap;letter-spacing:0.6px">(0/0)</div><svg class="ic" style="left:746px;top:742px" width="11" height="7" viewBox="0 0 11 7"><path d="M1 1.2L5.3 5.4L9.6 1.2" fill="none" stroke="#333" stroke-width="1.2"/></svg><div class="abs" style="left:765px;top:732.76px;font-size:18px;line-height:22px;color:#1a6fa3;font-weight:400;white-space:nowrap;letter-spacing:0.1px;-webkit-text-stroke:0.45px #1a6fa3">Test cases verifying this requirement</div><svg class="ic" style="left:1476px;top:732px" width="20" height="20" viewBox="0 0 20 20">
<circle cx="10" cy="10" r="8.6" fill="none" stroke="#1670a3" stroke-width="1.8"/>
<path d="M10 5.4V14.6M5.4 10H14.6" stroke="#1670a3" stroke-width="2.2"/></svg><svg class="ic" style="left:1508px;top:732px" width="20" height="20" viewBox="0 0 20 20">
<circle cx="7.8" cy="7.8" r="5.8" fill="none" stroke="#1670a3" stroke-width="2"/>
<path d="M12 12L18.2 18.2" stroke="#1670a3" stroke-width="2.6"/></svg><svg class="ic" style="left:1540px;top:732px" width="20" height="20" viewBox="0 0 20 20">
<circle cx="10" cy="10" r="8.6" fill="none" stroke="#6d7378" stroke-width="1.8"/>
<path d="M5.4 10H14.6" stroke="#6d7378" stroke-width="2.2"/></svg><div class="abs" style="left:1581px;top:142px;width:17px;height:613px;background:#f1f1f1"></div><div class="abs" style="left:1583px;top:158px;width:13px;height:256px;background:#c1c1c1"></div><svg class="ic" style="left:1585px;top:147px" width="9" height="6" viewBox="0 0 9 6"><path d="M0.5 5L4.5 0.8L8.5 5Z" fill="#a3a3a3"/></svg><svg class="ic" style="left:1585px;top:741px" width="9" height="6" viewBox="0 0 9 6"><path d="M0.5 0.8L4.5 5L8.5 0.8Z" fill="#505050"/></svg>
<!--DETAIL-->
</body></html>
